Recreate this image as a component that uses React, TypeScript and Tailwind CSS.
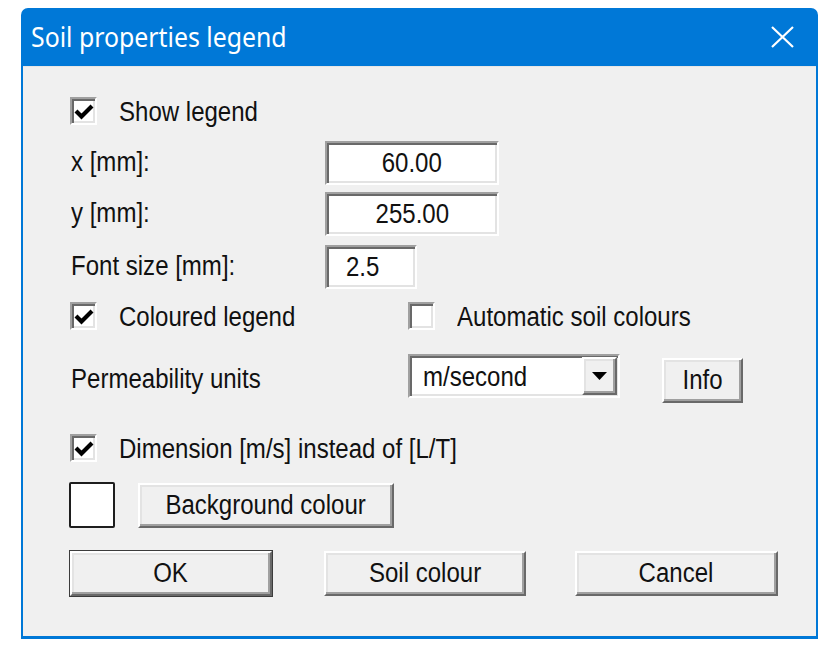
import type { ReactNode } from "react";

// MS Sans Serif blown up: tall but narrow glyphs, so squeeze Arial-metric text horizontally
const LABEL_FONT =
    "inline-block scale-x-[0.89] whitespace-nowrap font-['Liberation_Sans',Arial,sans-serif] text-[27px] leading-none text-[#111]";

// classic 3D edges
const SUNKEN =
    "border-2 border-t-[#a0a0a0] border-l-[#a0a0a0] border-r-white border-b-white shadow-[inset_2px_2px_0_#696969,inset_-2px_-2px_0_#e3e3e3]";
const RAISED =
    "border-2 border-t-white border-l-white border-r-[#696969] border-b-[#696969] shadow-[inset_-2px_-2px_0_#a0a0a0,inset_2px_2px_0_#e3e3e3] bg-[#f0f0f0]";

const CheckBox = ({ checked }: { checked?: boolean }) => (
    <div className={`flex h-[28px] w-[27px] shrink-0 items-center justify-center bg-white ${SUNKEN}`}>
        {checked && (
            <svg width="20" height="16" viewBox="0 0 20 16" className="ml-[1px] mt-[1px]">
                <path d="M2 7 L7.5 12.5 L18 2" fill="none" stroke="#000" strokeWidth="4.2" />
            </svg>
        )}
    </div>
);

const CheckRow = ({ checked, children }: { checked?: boolean; children: ReactNode }) => (
    <div className="flex h-[28px] items-center">
        <CheckBox checked={checked} />
        <span className={`ml-[22px] mt-[3px] origin-left ${LABEL_FONT}`}>{children}</span>
    </div>
);

const Field = ({ value, className, left }: { value: string; className: string; left?: boolean }) => (
    <div className={`flex h-[44px] items-center bg-white ${SUNKEN} ${className}`}>
        <span className={`${left ? "origin-left" : ""} ${LABEL_FONT}`}>{value}</span>
    </div>
);

const Button = ({
    children,
    className,
    isDefault,
}: {
    children: ReactNode;
    className: string;
    isDefault?: boolean;
}) => (
    <div
        className={`flex h-[45px] items-center justify-center ${RAISED} ${
            isDefault ? "outline outline-1 outline-[#3c3c3c]" : ""
        } ${className}`}
    >
        <span className={LABEL_FONT}>{children}</span>
    </div>
);

export default function App() {
    return (
        <div className="min-h-[646px] bg-white pl-[21px] pt-[8px]">
            <div className="flex h-[631px] w-[797px] flex-col rounded-t-[7px] bg-[#0078d7] px-[2px] pb-[3px]">
                {/* title bar */}
                <div className="flex h-[58px] shrink-0 items-center justify-between pl-[8px] pr-[22px]">
                    <span className="inline-block origin-left scale-x-[0.92] whitespace-nowrap font-['Noto_Sans','Open_Sans',sans-serif] text-[27px] text-white">
                        Soil properties legend
                    </span>
                    <svg width="23" height="22" viewBox="0 0 23 22">
                        <path d="M1 1 L22 21 M22 1 L1 21" stroke="#fff" strokeWidth="2.2" />
                    </svg>
                </div>

                {/* body */}
                <div className="flex flex-1 flex-col border-t border-[#e6e6e6] bg-[#f0f0f0] pl-[47px] pt-[30px]">
                    <CheckRow checked>Show legend</CheckRow>

                    <div className="mt-[16px] flex items-center">
                        <div className="ml-[1px] w-[254px]">
                            <span className={`origin-left ${LABEL_FONT}`}>x [mm]:</span>
                        </div>
                        <Field value="60.00" className="w-[174px] justify-center" />
                    </div>
                    <div className="mt-[7px] flex items-center">
                        <div className="ml-[1px] w-[254px]">
                            <span className={`origin-left ${LABEL_FONT}`}>y [mm]:</span>
                        </div>
                        <Field value="255.00" className="w-[174px] justify-center" />
                    </div>
                    <div className="mt-[9px] flex items-center">
                        <div className="ml-[1px] w-[254px]">
                            <span className={`origin-left ${LABEL_FONT}`}>Font size [mm]:</span>
                        </div>
                        <Field left value="2.5" className="w-[92px] pl-[19px]" />
                    </div>

                    <div className="mt-[13px] flex">
                        <div className="w-[338px]">
                            <CheckRow checked>Coloured legend</CheckRow>
                        </div>
                        <CheckRow>Automatic soil colours</CheckRow>
                    </div>

                    <div className="mt-[24px] flex items-start">
                        <div className="ml-[1px] mt-[12px] w-[337px]">
                            <span className={`origin-left ${LABEL_FONT}`}>Permeability units</span>
                        </div>
                        <div className={`flex h-[44px] w-[212px] items-center bg-white ${SUNKEN}`}>
                            <div className="flex-1 pl-[13px] pt-[3px]">
                                <span className={`origin-left ${LABEL_FONT}`}>m/second</span>
                            </div>
                            <div className={`mr-[1px] flex h-[38px] w-[35px] items-center justify-center ${RAISED}`}>
                                <svg width="15" height="8" viewBox="0 0 15 8">
                                    <path d="M0 0 H15 L7.5 8 Z" fill="#000" />
                                </svg>
                            </div>
                        </div>
                        <Button className="ml-[42px] mt-[4px] w-[81px]">Info</Button>
                    </div>

                    <div className="mt-[31px]">
                        <CheckRow checked>Dimension [m/s] instead of [L/T]</CheckRow>
                    </div>

                    <div className="mt-[20px] flex items-center">
                        <div className="-ml-[1px] h-[46px] w-[46px] rounded-[2px] border-2 border-[#1e1e1e] bg-white" />
                        <Button className="ml-[23px] w-[256px]">Background colour</Button>
                    </div>

                    <div className="mt-[23px] flex">
                        <Button isDefault className="w-[202px]">
                            OK
                        </Button>
                        <Button className="ml-[52px] w-[202px]">Soil colour</Button>
                        <Button className="ml-[49px] w-[203px]">Cancel</Button>
                    </div>
                </div>
            </div>
        </div>
    );
}
